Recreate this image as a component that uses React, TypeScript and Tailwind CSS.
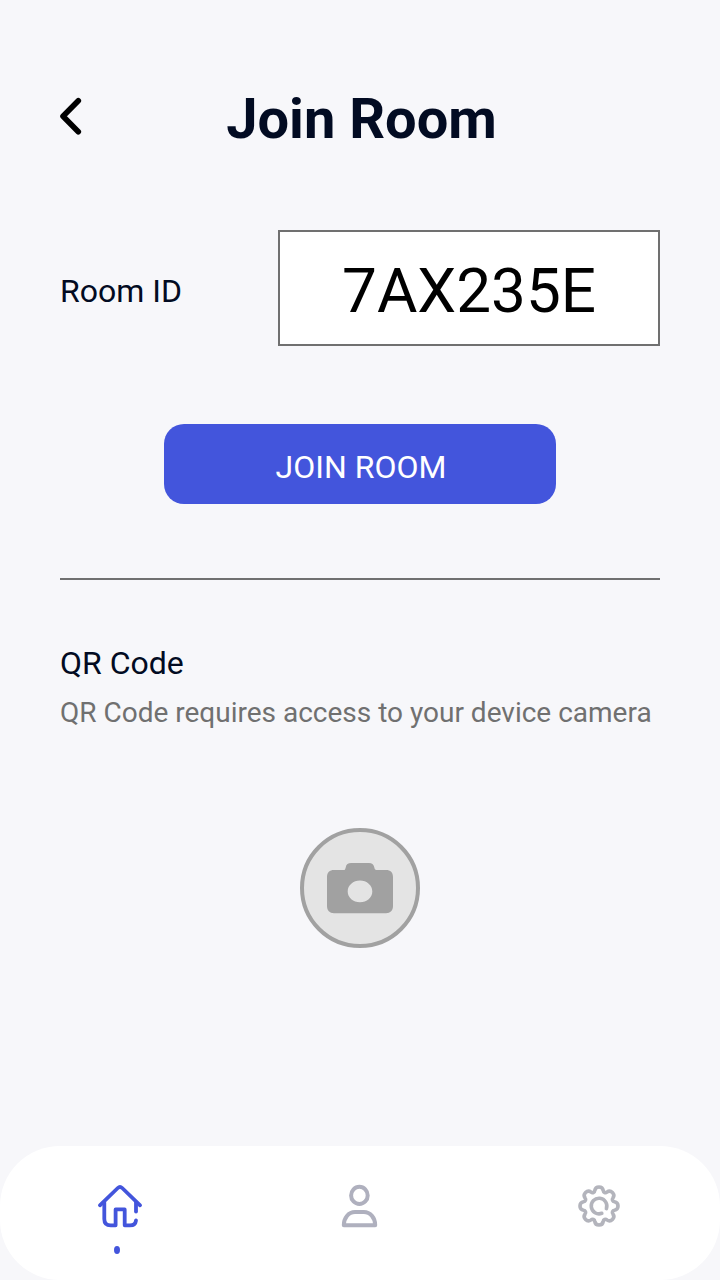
import React from "react";

const LOBES = 8;

function gearPath(): string {
  const lobeR = 15.1;
  const valleyR = 16.8;
  const a = 4.3;
  const b = 2.2;
  const at = (r: number, deg: number): [number, number] => [
    r * Math.sin((deg * Math.PI) / 180),
    -r * Math.cos((deg * Math.PI) / 180),
  ];
  const join = (lobeDeg: number, valleyDeg: number): string => {
    const [lx, ly] = at(lobeR, lobeDeg);
    const [vx, vy] = at(valleyR, valleyDeg);
    const t = a / (a + b);
    return `${(lx + (vx - lx) * t).toFixed(2)} ${(ly + (vy - ly) * t).toFixed(2)}`;
  };
  const step = 360 / LOBES;
  let d = `M${join(0, -step / 2)}`;
  for (let i = 0; i < LOBES; i++) {
    const deg = i * step;
    d += `A${a} ${a} 0 0 1 ${join(deg, deg + step / 2)}`;
    d += `A${b} ${b} 0 0 0 ${join(deg + step, deg + step / 2)}`;
  }
  return d + "Z";
}

function BackIcon() {
  return (
    <svg className="h-10 w-6" viewBox="0 0 24 40" fill="none" stroke="#000" strokeWidth="5.6" strokeLinecap="round" strokeLinejoin="round">
      <path d="M18.3 4.8 3 20.3 18.3 35.8" />
    </svg>
  );
}

function CameraIcon() {
  return (
    <svg className="h-[51px] w-[66px]" viewBox="0 0.4 66 51" fill="#a1a1a1">
      <path
        fillRule="evenodd"
        d="M7 7.4H16.5C18 7.4 18.3 6.4 18.7 4.8 19.3 1.6 21 .4 24.2.4H42C45 .4 46.5 1.6 47.2 4.4 47.6 6.4 48 7.4 49.5 7.4H59C63.5 7.4 66 10 66 14.4V43.4C66 47.8 63.4 50.6 59 50.6H7C2.6 50.6 0 47.8 0 43.4V14.4C0 10 2.6 7.4 7 7.4ZM33 18C26.2 18 20.7 22.8 20.7 28.8S26.2 39.6 33 39.6 45.3 34.8 45.3 28.8 39.8 18 33 18Z"
      />
    </svg>
  );
}

function HomeIcon() {
  return (
    <svg className="h-12 w-12" viewBox="0 0 48 48" fill="none" stroke="#4355dc" strokeWidth="3.8" strokeLinecap="round" strokeLinejoin="round">
      <path d="M3.9 23.3 21.8 6Q24 3.9 26.2 6L44.1 23.3" />
      <path d="M8.3 20.5V36.9Q8.3 43.3 14.7 43.3H19.6V27.4H28.7V43.3H34Q39.4 43.3 40 38.4" />
      <path d="M40 20.5V29.5" />
    </svg>
  );
}

function PersonIcon() {
  return (
    <svg className="h-12 w-12" viewBox="0 0 48 48" fill="none" stroke="#afb0be" strokeWidth="4" strokeLinejoin="round">
      <ellipse cx="23.4" cy="13.4" rx="8.3" ry="8.6" />
      <path d="M7.8 43.2C7.8 36 12.4 30 19 30H27.8C34.4 30 39.2 36 39.2 43.2Z" />
    </svg>
  );
}

function GearIcon() {
  return (
    <svg className="h-12 w-12" viewBox="-23 -24 48 48" fill="none" stroke="#b3b4bc" strokeWidth="3.6" strokeLinecap="round" strokeLinejoin="round">
      <path d={gearPath()} />
      <path d="M7.4 2.6A7.8 7.8 0 1 0 2.8 7.3" />
    </svg>
  );
}

export default function App() {
  return (
    <div className="flex h-[1280px] w-[720px] flex-col overflow-hidden bg-[#f7f7fa] font-[Roboto,sans-serif] text-[#020b22]">
      <header className="mt-[87px] grid h-16 shrink-0 grid-cols-[60px_1fr_60px] px-[60px]">
        <button className="flex pt-[9px]" aria-label="Back">
          <BackIcon />
        </button>
        <h1 className="pl-[3px] text-center text-[56px] leading-[64px] font-bold whitespace-nowrap">Join Room</h1>
      </header>

      <main className="flex grow flex-col px-[60px] pt-[79px]">
        <div className="flex h-[116px] items-center justify-between">
          <label className="pt-1.5 text-[32px] leading-10">Room ID</label>
          <div className="flex h-full w-[382px] items-center justify-center border-2 border-[#707070] bg-white pt-1.5 text-[62px] leading-[72px] text-black">
            7AX235E
          </div>
        </div>
        <button className="mt-[78px] flex h-20 w-[392px] items-center justify-center self-center rounded-[20px] bg-[#4355dc] pt-1.5 pl-0.5 text-[32px] leading-10 text-white">
          JOIN ROOM
        </button>
        <div className="mt-[74px] h-0.5 bg-[#707070]" />
        <h2 className="mt-[63px] text-[32px] leading-10">QR Code</h2>
        <p className="mt-[14px] text-[28px] leading-8 whitespace-nowrap text-[#707070]">
          QR Code requires access to your device camera
        </p>
        <button className="mt-[99px] flex size-[120px] items-center justify-center self-center rounded-full border-4 border-[#a1a1a1] bg-[#e4e4e4]" aria-label="Scan">
          <CameraIcon />
        </button>
      </main>

      <nav className="flex h-[134px] shrink-0 justify-between rounded-[60px] bg-white px-24 pt-9">
        <div className="flex w-12 flex-col items-center">
          <HomeIcon />
          <span className="mt-4 mr-[7px] h-2 w-1.5 rounded-[50%] bg-[#4355dc]" />
        </div>
        <PersonIcon />
        <GearIcon />
      </nav>
    </div>
  );
}
